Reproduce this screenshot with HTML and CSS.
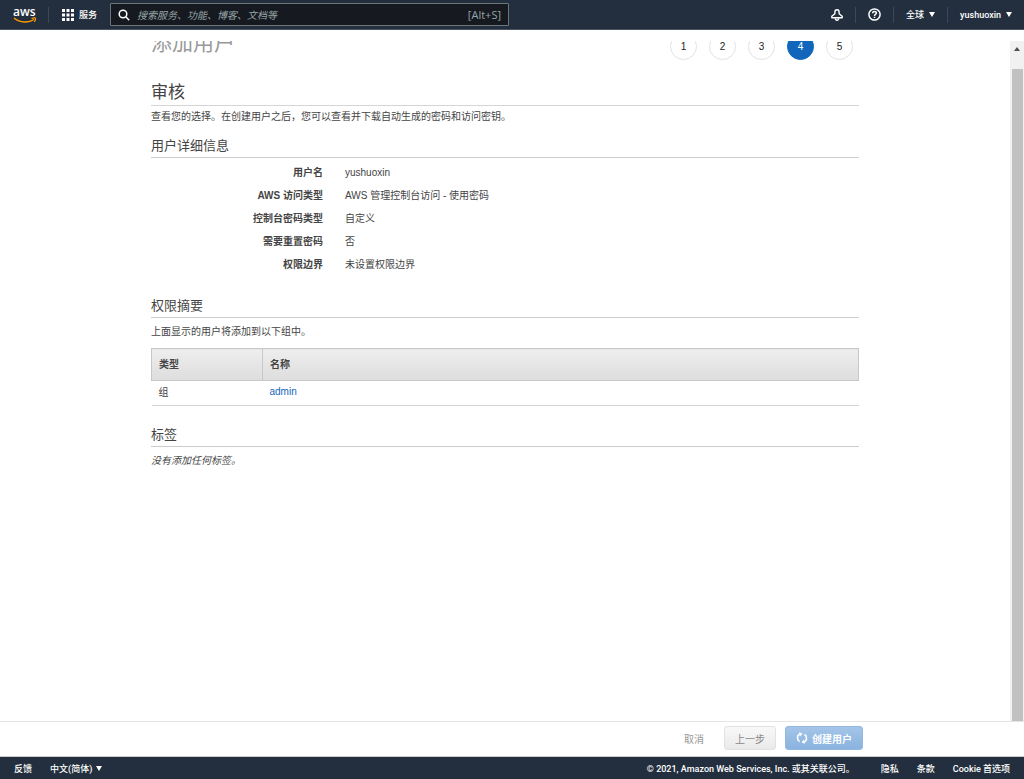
FILE: index.html
```
<!DOCTYPE html>
<html lang="zh-CN">
<head>
    <meta charset="UTF-8">
    <meta name="viewport" content="width=device-width, initial-scale=1.0">
    <title>IAM Management Console</title>
    <link rel="stylesheet" href="styles.css">
</head>
<body>
    <header class="navbar">
        <a href="#" class="logo" aria-label="AWS">
            <svg width="24" height="20" viewBox="0 0 24 20">
                <text x="0" y="11" class="logo-text">aws</text>
                <path d="M1 13C7 18 16 18 21 14.500" fill="none" stroke="#f90" stroke-width="1.500"/>
                <path d="M18.500 13.500c1.500-.6 3-.8 4-.4.3 1-.2 2.600-1.200 3.700" fill="none" stroke="#f90" stroke-width="1.200"/>
            </svg>
        </a>
        <button type="button" class="nav-button services">
            <svg width="12" height="12" viewBox="0 0 12 12" fill="#fff">
                <path d="M0 0h3v3H0zM4.500 0h3v3h-3zM9 0h3v3H9zM0 4.500h3v3H0zM4.500 4.500h3v3h-3zM9 4.500h3v3H9zM0 9h3v3H0zM4.500 9h3v3h-3zM9 9h3v3H9z"/>
            </svg>
            服务
        </button>
        <label class="search">
            <svg width="12" height="12" viewBox="0 0 12 12" fill="none" stroke="#fff" stroke-width="1.500">
                <circle cx="5" cy="5" r="3.800"/>
                <path d="M7.800 7.800l3.400 3.400"/>
            </svg>
            <input type="text" class="search-input" placeholder="搜索服务、功能、博客、文档等" aria-label="搜索">
            <span class="shortcut">[Alt+S]</span>
        </label>
        <nav class="nav-right">
            <button type="button" class="nav-button" aria-label="通知">
                <svg width="12" height="12" viewBox="0 0 12 12" fill="none" stroke="#fff" stroke-width="1.400" stroke-linejoin="round">
                    <path d="M6 .8C4.600 .8 3.900 1.800 3.900 3v1.700L.8 7.300v1.500h10.400V7.300L8.100 4.700V3C8.100 1.800 7.400 .8 6 .8z"/>
                    <path d="M4.300 9.200c.2 2.800 3.200 2.800 3.400 0"/>
                </svg>
            </button>
            <button type="button" class="nav-button" aria-label="帮助">
                <svg width="13" height="13" viewBox="0 0 13 13" fill="none" stroke="#fff" stroke-width="1.500">
                    <circle cx="6.500" cy="6.500" r="5.600"/>
                    <path d="M4.600 5.300c0-2.500 3.800-2.500 3.800-.2 0 1.400-1.900 1.300-1.900 2.800M6.500 8.700v1.300"/>
                </svg>
            </button>
            <button type="button" class="nav-button">全球 <span class="caret"></span></button>
            <button type="button" class="nav-button">yushuoxin <span class="caret"></span></button>
        </nav>
    </header>

    <main class="main">
        <div class="viewport">
            <div class="content">
                <div class="wizard-head">
                    <h1>添加用户</h1>
                    <ol class="steps">
                        <li>1</li>
                        <li>2</li>
                        <li>3</li>
                        <li class="active">4</li>
                        <li>5</li>
                    </ol>
                </div>

                <h2>审核</h2>
                <p class="intro">查看您的选择。在创建用户之后，您可以查看并下载自动生成的密码和访问密钥。</p>

                <h3>用户详细信息</h3>
                <dl class="details">
                    <dt>用户名</dt>
                    <dd>yushuoxin</dd>
                    <dt>AWS 访问类型</dt>
                    <dd>AWS 管理控制台访问 - 使用密码</dd>
                    <dt>控制台密码类型</dt>
                    <dd>自定义</dd>
                    <dt>需要重置密码</dt>
                    <dd>否</dd>
                    <dt>权限边界</dt>
                    <dd>未设置权限边界</dd>
                </dl>

                <h3>权限摘要</h3>
                <p class="note">上面显示的用户将添加到以下组中。</p>
                <table class="groups">
                    <thead>
                        <tr><th class="col-type">类型</th><th>名称</th></tr>
                    </thead>
                    <tbody>
                        <tr><td>组</td><td><a href="#">admin</a></td></tr>
                    </tbody>
                </table>

                <h3>标签</h3>
                <p class="note empty">没有添加任何标签。</p>
            </div>
        </div>
        <div class="scrollbar">
            <span class="scroll-up"></span>
            <div class="thumb"></div>
        </div>
    </main>

    <div class="actions">
        <button type="button" class="btn btn-link">取消</button>
        <button type="button" class="btn btn-default">上一步</button>
        <button type="button" class="btn btn-primary">
            <svg width="12" height="12" viewBox="0 0 12 12" fill="none" stroke="#fff" stroke-width="1.600">
                <path d="M4 2C.6 3.500 .8 8 3.600 9.600M8 10C11.400 8.500 11.200 4 8.400 2.400"/>
                <path d="M3 .2l3.400 1.200-2 3zM9 11.800l-3.400-1.200 2-3z" fill="#fff" stroke="none"/>
            </svg>
            创建用户
        </button>
    </div>

    <footer class="footer">
        <a href="#">反馈</a>
        <button type="button" class="language">中文(简体) <span class="caret"></span></button>
        <span class="copyright">© 2021, Amazon Web Services, Inc. 或其关联公司。</span>
        <a href="#">隐私</a>
        <a href="#">条款</a>
        <a href="#">Cookie 首选项</a>
    </footer>
</body>
</html>
```
FILE: styles.css
```
* {
    box-sizing: border-box;
}

body {
    display: flex;
    flex-direction: column;
    height: 100vh;
    margin: 0;
    overflow: hidden;
    font-family: "Liberation Sans", "Noto Sans CJK SC", sans-serif;
    font-size: 10px;
    color: #444;
    background: #fff;
}

h1, h2, h3, p, ol, dl, dd {
    margin: 0;
    padding: 0;
}

h1, h2, h3 {
    font-weight: 400;
}

a {
    color: #1166bb;
    text-decoration: none;
}

button {
    font: inherit;
    color: inherit;
    cursor: pointer;
}

svg {
    flex: none;
}

/* Top navigation */
.navbar {
    display: flex;
    flex: none;
    align-items: center;
    height: 30px;
    color: #fff;
    background: #232f3e;
    border-bottom: 1px solid #4a5360;
    font-family: Roboto, "Noto Sans CJK SC", sans-serif;
    font-size: 9px;
    font-weight: 500;
}

.logo {
    display: flex;
    padding: 0 11px 0 13px;
}

.logo-text {
    font: 600 12px "Open Sans", sans-serif;
    fill: #fff;
}

.nav-button {
    display: flex;
    align-items: center;
    gap: 5px;
    height: 16px;
    padding: 0 12px;
    background: none;
    border: 0;
    border-left: 1px solid #3d4856;
}

.services {
    padding: 0 13px;
}

.search {
    display: flex;
    align-items: center;
    gap: 7px;
    width: 399px;
    height: 23px;
    padding: 0 7px;
    background: #161920;
    border: 1px solid #6b7778;
    border-radius: 1px;
}

.search-input {
    flex: 1;
    min-width: 0;
    padding: 0;
    color: #fff;
    font: 400 10px "Open Sans", "Noto Sans CJK SC", sans-serif;
    background: none;
    border: 0;
    outline: none;
}

.search-input::placeholder {
    color: #95a5a6;
    font-style: italic;
}

.shortcut {
    color: #95a5a6;
    font: 400 11px "Open Sans", sans-serif;
}

.nav-right {
    display: flex;
    margin-left: auto;
}

.nav-right .nav-button:first-child {
    border-left: 0;
}

.caret {
    border: 3px solid transparent;
    border-top: 5px solid currentColor;
    border-bottom: 0;
}

/* Scrolling area */
.main {
    display: flex;
    flex: 1;
    min-height: 0;
    padding-top: 11px;
}

.viewport {
    flex: 1;
    overflow: hidden;
}

.content {
    max-width: 708px;
    margin: -8px auto 0;
}

.wizard-head {
    display: flex;
    justify-content: space-between;
    align-items: flex-start;
    height: 27px;
    margin-bottom: 20px;
}

h1 {
    color: #999;
    font-size: 21px;
    line-height: 20px;
}

.steps {
    display: flex;
    gap: 12px;
    padding-right: 6px;
    list-style: none;
}

.steps li {
    width: 27px;
    height: 27px;
    color: #222;
    line-height: 25px;
    text-align: center;
    border: 1px solid #e2e2e2;
    border-radius: 50%;
}

.steps .active {
    color: #fff;
    background: #1166bb;
    border-color: #1166bb;
}

h2 {
    font-size: 17px;
    line-height: 25px;
    border-bottom: 1px solid #d5d5d5;
}

.intro {
    padding-top: 1px;
    margin-bottom: 9px;
    line-height: 20px;
}

h3 {
    padding-bottom: 2px;
    font-size: 13px;
    line-height: 19px;
    border-bottom: 1px solid #ccc;
}

.details {
    display: grid;
    grid-template-columns: 172px 1fr;
    column-gap: 22px;
    padding: 3px 0 20px;
    line-height: 23px;
}

dt {
    font-weight: 700;
    text-align: right;
}

.note {
    padding: 4px 0 6px;
    line-height: 20px;
}

.empty {
    font-style: italic;
}

.groups {
    width: 100%;
    margin-bottom: 19px;
    table-layout: fixed;
    border-collapse: collapse;
}

.groups th {
    height: 32px;
    padding: 0 7px 3px;
    text-align: left;
    background: linear-gradient(#eee, #ddd);
    border: 1px solid #c8c8c8;
}

.groups .col-type {
    width: 111px;
}

.groups td {
    height: 25px;
    padding: 0 7px 3px;
    border-bottom: 1px solid #d5d5d5;
}

.scrollbar {
    display: flex;
    flex-direction: column;
    align-items: center;
    width: 14px;
    padding-top: 6px;
    background: #f1f1f1;
}

.scroll-up {
    border: 3px solid transparent;
    border-top: 0;
    border-bottom: 4px solid #505050;
}

.thumb {
    flex: 1;
    width: 11px;
    margin-top: 18px;
    background: #c1c1c1;
}

/* Wizard buttons */
.actions {
    display: flex;
    flex: none;
    justify-content: flex-end;
    align-items: center;
    height: 36px;
    padding: 0 161px 2px 0;
    border-top: 1px solid #e5e5e5;
    border-bottom: 1px solid #ccc;
}

.btn {
    display: flex;
    align-items: center;
    gap: 4px;
    height: 24px;
    padding: 0 10px;
    border: 1px solid transparent;
    border-radius: 3px;
}

.btn-link {
    margin-right: 9px;
    color: #999;
    background: none;
}

.btn-default {
    margin-right: 9px;
    color: #888;
    background: linear-gradient(#f8f8f8, #eaeaea);
    border-color: #e2e2e2;
}

.btn-primary {
    color: #fff;
    font-weight: 700;
    background: linear-gradient(#a4c5e8, #8ab3df);
    border-color: #94b8de;
}

/* Footer */
.footer {
    display: flex;
    flex: none;
    align-items: center;
    gap: 18px;
    height: 22px;
    padding: 0 14px;
    color: #fff;
    background: #232f3e;
    font-family: Roboto, "Noto Sans CJK SC", sans-serif;
    font-size: 9px;
    font-weight: 500;
}

.footer a {
    color: #fff;
}

.language {
    display: flex;
    align-items: center;
    gap: 4px;
    padding: 0;
    background: none;
    border: 0;
}

.copyright {
    margin-left: auto;
    margin-right: 8px;
}
```
